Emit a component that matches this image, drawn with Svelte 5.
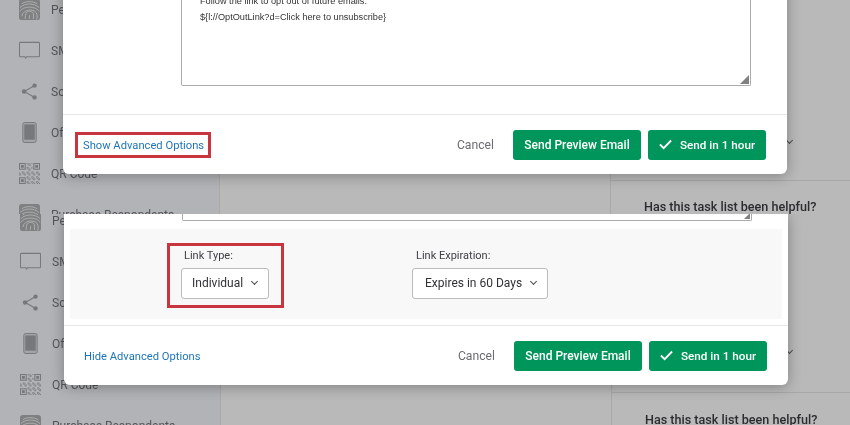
<script>
  const rows = [
    { label: 'Personal Link', icon: 'finger' },
    { label: 'SMS', icon: 'sms' },
    { label: 'Social Media', icon: 'share' },
    { label: 'Offline App', icon: 'tablet' },
    { label: 'QR Code', icon: 'qr' },
    { label: 'Purchase Respondents', icon: 'people' }
  ];
  const finder = [[0,0,7,7],[15,0,7,7],[0,15,7,7]];
  const finderInner = [[2,2,3,3],[17,2,3,3],[2,17,3,3]];
  const qr = [];
  for (let y = 0; y < 22; y++) {
    for (let x = 0; x < 22; x++) {
      const inFinder = (x < 8 && y < 8) || (x > 13 && y < 8) || (x < 8 && y > 13);
      if (!inFinder && (x * 7 + y * 13 + x * y) % 5 < 2) qr.push([x, y]);
    }
  }
</script>

{#snippet icon(name)}
  {#if name === 'finger' || name === 'people'}
    <svg class="ic" viewBox="0 0 22 22">
      <rect width="22" height="22" rx="3" class="solid" />
      <g class="arc">
        <path d="M3 5c4-3 12-3 16 0M1 9c5-5 15-5 20 0M1 13c3-6 17-6 20 0M3 18c1-8 15-9 16-1 0 2 0 3-.5 4.500M6.500 21c0-3 0-5 1.500-7 2-2 6-1 7 1 .5 2 .5 4 0 6M10.500 21c.5-1 .5-3 .5-4" />
      </g>
    </svg>
  {:else if name === 'sms'}
    <svg class="ic" viewBox="0 0 22 22">
      <path class="line" d="M1.500 2.500h19a1 1 0 0 1 1 1v13a1 1 0 0 1-1 1H8l-1 1.500-1-1.500H1.500a1 1 0 0 1-1-1v-13a1 1 0 0 1 1-1z" />
    </svg>
  {:else if name === 'share'}
    <svg class="ic" viewBox="0 0 22 22">
      <path class="line" d="M16 5 5.500 11 16 17" />
      <circle cx="16.300" cy="4.800" r="2.300" class="fill" />
      <circle cx="5.300" cy="11" r="2.300" class="fill" />
      <circle cx="16.300" cy="17.200" r="2.300" class="fill" />
    </svg>
  {:else if name === 'tablet'}
    <svg class="ic" viewBox="0 0 22 22">
      <rect x="4" y="0.500" width="14" height="21" rx="2" class="tabletbody" />
      <rect x="5.500" y="2.500" width="11" height="16" class="fill" />
    </svg>
  {:else}
    <svg class="ic" viewBox="0 0 22 22">
      {#each finder as [x, y, w, h]}
        <rect x={x + 0.5} y={y + 0.5} width={w - 1} height={h - 1} class="line" />
      {/each}
      {#each finderInner as [x, y, w, h]}
        <rect {x} {y} width={w} height={h} class="fill" />
      {/each}
      {#each qr as [x, y]}
        <rect {x} {y} width="1" height="1" class="fill" />
      {/each}
    </svg>
  {/if}
{/snippet}

{#snippet backdrop()}
  <aside class="side">
    {#each rows as r}
      <div class="row">
        {@render icon(r.icon)}
        <span>{r.label}</span>
      </div>
    {/each}
  </aside>
  <div class="center"></div>
  <div class="right">
    <div class="chev-row"><i class="chev dark"></i></div>
    <div class="helpful">Has this task list been helpful?</div>
  </div>
{/snippet}

{#snippet actions()}
  <div class="actions">
    <span class="cancel">Cancel</span>
    <button class="btn preview">Send Preview Email</button>
    <button class="btn send">
      <svg viewBox="0 0 14 11" class="check"><path d="M1 5.500 5 9.500 13 1.200" /></svg>
      Send in 1 hour
    </button>
  </div>
{/snippet}

<div class="page">
  <section class="pane first">
    {@render backdrop()}
    <div class="modal">
      <div class="msg">
        <p>Follow the link to opt out of future emails.</p>
        <p>$&#123;l://OptOutLink?d=Click here to unsubscribe&#125;</p>
        <svg class="grip" viewBox="0 0 9 9"><path d="M9 0v9H0z" /></svg>
      </div>
      <footer class="foot">
        <a class="adv boxed" href="#show">Show Advanced Options</a>
        {@render actions()}
      </footer>
    </div>
  </section>

  <section class="pane second">
    {@render backdrop()}
    <div class="modal">
      <div class="msg stub">
        <svg class="grip" viewBox="0 0 9 9"><path d="M9 0v9H0z" /></svg>
      </div>
      <div class="options">
        <div class="group boxed-group">
          <div class="lab">Link Type:</div>
          <div class="select type">Individual <i class="chev"></i></div>
        </div>
        <div class="group plain">
          <div class="lab">Link Expiration:</div>
          <div class="select expiry">Expires in 60 Days <i class="chev"></i></div>
        </div>
      </div>
      <footer class="foot">
        <a class="adv" href="#hide">Hide Advanced Options</a>
        {@render actions()}
      </footer>
    </div>
  </section>
</div>

<style>
  :global(body) { margin: 0; background: #b9b9b9; }
  .page { width: 850px; height: 425px; overflow: hidden; font-family: Roboto, "Liberation Sans", sans-serif; filter: blur(0.3px); }
  .pane { position: relative; display: flex; overflow: hidden; background: #b9b9b9; }
  .first { height: 214px; }
  .second { height: 211px; }

  .side { width: 220px; flex: none; background: #b1b3b6; border-right: 1px solid #a9a9a9; box-sizing: border-box; padding-left: 19px; }
  .second .side { width: 221px; padding-left: 20px; }
  .row { height: 41px; display: flex; align-items: center; gap: 11px; color: #55565a; font-size: 12px; white-space: nowrap; position: relative; top: -11px; }
  .second .row { top: -14px; }
  .ic { width: 21px; height: 21px; flex: none; }
  .solid { fill: #7f8082; }
  .arc path { fill: none; stroke: #b3b5b7; stroke-width: 0.900; }
  .line { fill: none; stroke: #77787b; stroke-width: 1.100; }
  .fill { fill: #77787b; }
  .tabletbody { fill: #a3a4a6; stroke: #77787b; stroke-width: 1; }

  .center { width: 390px; flex: none; border-right: 1px solid #a9a9a9; }
  .right { flex: 1; }
  .chev-row { height: 181px; border-bottom: 1px solid #a7a7a7; display: flex; justify-content: flex-end; align-items: flex-start; padding: 138px 58px 0 0; box-sizing: border-box; }
  .second .chev-row { height: 179px; padding-top: 134px; }
  .helpful { color: #2b2c30; font-size: 12.600px; font-weight: 500; padding: 18px 0 0 33px; white-space: nowrap; }
  .second .helpful { padding-top: 19px; }

  .chev { display: inline-block; width: 4px; height: 4px; border-right: 1px solid #4a4b4f; border-bottom: 1px solid #4a4b4f; transform: rotate(45deg); }

  .modal { position: absolute; width: 724px; background: #fff; border-radius: 0 0 6px 6px; box-shadow: 0 2px 14px rgba(0, 0, 0, 0.3); z-index: 2; }
  .first .modal { left: 63px; top: -30px; padding-top: 20px; }
  .second .modal { left: 64px; top: 0; }

  .msg { position: relative; box-sizing: border-box; width: 570px; height: 96px; margin-left: 118px; padding: 3px 18px; border: 1px solid #ababab; border-top: 0; border-radius: 0 0 2px 2px; font-family: "Liberation Sans", sans-serif; font-size: 9.200px; line-height: 16px; color: #333; }
  .msg p { margin: 0; }
  .stub { height: 7px; padding: 0; }
  .stub .grip { width: 6px; height: 6px; }
  .grip { position: absolute; right: 1px; bottom: 1px; width: 9px; height: 9px; fill: #808080; }

  .foot { height: 60px; border-top: 1px solid #e8e8e8; box-sizing: border-box; display: flex; align-items: center; justify-content: space-between; padding: 0 21px 0 20px; margin-top: 28px; }
  .second .foot { margin-top: 6px; }
  .adv { color: #1f74b8; font-size: 11.200px; text-decoration: none; white-space: nowrap; margin-top: 2px; }
  .boxed { border: 3px solid #c9353f; margin-left: -8px; padding: 4px 4px 3px 5px; margin-top: 1px; }

  .actions { display: flex; align-items: center; }
  .cancel { color: #6b6d70; font-size: 12.200px; margin-right: 19px; }
  .btn { height: 30px; border: 0; border-radius: 3px; background: #00955a; color: #fff; font: 500 12px Roboto, "Liberation Sans", sans-serif; display: flex; align-items: center; justify-content: center; padding: 0; }
  .preview { width: 128px; margin-right: 7px; }
  .send { width: 118px; gap: 8px; font-size: 11.700px; }
  .check { width: 13px; height: 11px; fill: none; stroke: #fff; stroke-width: 2; }

  .options { margin: 8px 6px 0; height: 90px; background: #f8f8f8; box-sizing: border-box; padding: 14px 0 0 97px; display: flex; align-items: flex-start; }
  .group { box-sizing: border-box; }
  .boxed-group { width: 117px; height: 65px; border: 3px solid #c9353f; padding: 3px 0 0 11px; }
  .plain { margin-left: 128px; padding-top: 6px; }
  .lab { color: #3f4044; font-size: 11px; height: 19px; line-height: 13px; padding-left: 3px; white-space: nowrap; }
  .plain .lab { padding-left: 4px; }
  .select { box-sizing: border-box; height: 31px; border: 1px solid #bcbcbc; border-radius: 3px; background: #fff; color: #2f3136; font-size: 12px; display: flex; align-items: center; justify-content: space-between; white-space: nowrap; }
  .type { width: 88px; padding: 0 11px 2px 10px; }
  .expiry { width: 136px; padding: 0 11px 2px 12px; }
  .select .chev { margin-top: -2px; }
</style>
